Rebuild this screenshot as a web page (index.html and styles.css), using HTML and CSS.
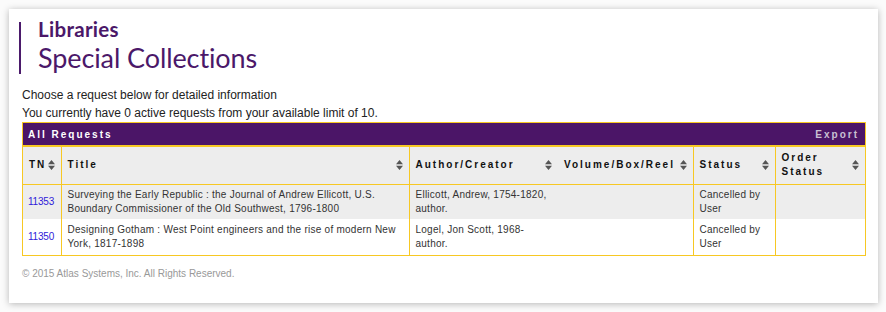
FILE: index.html
```html
<!DOCTYPE html>
<html lang="en">
<head>
    <meta charset="UTF-8">
    <title>Special Collections - All Requests</title>
    <link rel="stylesheet" href="styles.css">
</head>
<body>
    <div class="page">
        <!-- Logo -->
        <div class="logo">
            <div class="logo-top">Libraries</div>
            <div class="logo-name">Special Collections</div>
        </div>

        <p class="intro">Choose a request below for detailed information<br>
        You currently have 0 active requests from your available limit of 10.</p>

        <div class="requests">
            <div class="requests-bar">
                <span>All Requests</span>
                <a class="export" href="#">Export</a>
            </div>
            <table class="grid">
                <colgroup>
                    <col style="width: 38px">
                    <col style="width: 348px">
                    <col style="width: 149px">
                    <col style="width: 135px">
                    <col style="width: 82px">
                    <col style="width: 90px">
                </colgroup>
                <thead>
                    <tr>
                        <th><div class="th">TN <svg class="sort" viewBox="0 0 7 10"><path d="M0 4.2 3.5 0 7 4.2ZM0 5.8 3.5 10 7 5.8Z"/></svg></div></th>
                        <th><div class="th">Title <svg class="sort" viewBox="0 0 7 10"><path d="M0 4.2 3.5 0 7 4.2ZM0 5.8 3.5 10 7 5.8Z"/></svg></div></th>
                        <th class="no-right"><div class="th">Author/Creator <svg class="sort" viewBox="0 0 7 10"><path d="M0 4.2 3.5 0 7 4.2ZM0 5.8 3.5 10 7 5.8Z"/></svg></div></th>
                        <th class="no-left"><div class="th">Volume/Box/Reel <svg class="sort" viewBox="0 0 7 10"><path d="M0 4.2 3.5 0 7 4.2ZM0 5.8 3.5 10 7 5.8Z"/></svg></div></th>
                        <th><div class="th">Status <svg class="sort" viewBox="0 0 7 10"><path d="M0 4.2 3.5 0 7 4.2ZM0 5.8 3.5 10 7 5.8Z"/></svg></div></th>
                        <th><div class="th">Order<br>Status <svg class="sort" viewBox="0 0 7 10"><path d="M0 4.2 3.5 0 7 4.2ZM0 5.8 3.5 10 7 5.8Z"/></svg></div></th>
                    </tr>
                </thead>
                <tbody>
                    <tr class="odd">
                        <td class="tn"><a href="#">11353</a></td>
                        <td>Surveying the Early Republic : the Journal of Andrew Ellicott, U.S. Boundary Commissioner of the Old Southwest, 1796-1800</td>
                        <td class="no-right">Ellicott, Andrew, 1754-1820, author.</td>
                        <td class="no-left"></td>
                        <td>Cancelled by User</td>
                        <td></td>
                    </tr>
                    <tr class="last">
                        <td class="tn"><a href="#">11350</a></td>
                        <td>Designing Gotham : West Point engineers and the rise of modern New York, 1817-1898</td>
                        <td class="no-right">Logel, Jon Scott, 1968- author.</td>
                        <td class="no-left"></td>
                        <td>Cancelled by User</td>
                        <td></td>
                    </tr>
                </tbody>
            </table>
        </div>

        <div class="footer">&copy; 2015 Atlas Systems, Inc. All Rights Reserved.</div>
    </div>
</body>
</html>
```

FILE: styles.css
```css
/* Page */
body {
    margin: 0;
    padding: 9px 8px 9px 9px;
    background: #fbfbfb;
    font-family: "Liberation Sans", Arial, sans-serif;
    color: #333;
}

.page {
    background: #fff;
    height: 294px;
    box-sizing: border-box;
    padding: 13px 12px 0 13px;
    box-shadow: 0 1px 7px rgba(0, 0, 0, 0.28);
}

/* Logo */
.logo {
    display: flex;
    flex-direction: column;
    align-items: flex-start;
    margin-left: -3px;
    padding-left: 17px;
    border-left: 2px solid #4b1a6b;
    color: #4b1869;
    font-family: Lato, "Open Sans", sans-serif;
    height: 52px;
}

.logo-top {
    font-size: 20.5px;
    font-weight: bold;
    line-height: 20px;
    letter-spacing: 0.3px;
    margin-top: -3px;
}

.logo-name {
    font-size: 27px;
    line-height: 37px;
    letter-spacing: -0.1px;
    white-space: nowrap;
}

/* Intro text */
.intro {
    margin: 12px 0 0;
    font-size: 12px;
    line-height: 18px;
    color: #222;
}

/* Requests table */
.requests {
    border: 1px solid #f7c823;
}

.requests-bar {
    display: flex;
    justify-content: space-between;
    align-items: center;
    height: 22px;
    padding: 0 6px 0 5px;
    background: #4b1567;
    color: #fff;
    font-size: 10px;
    font-weight: bold;
    letter-spacing: 2px;
    border-bottom: 2px solid #f7c823;
}

.export {
    color: #c9c0d3;
    text-decoration: none;
}

.grid {
    width: 100%;
    border-collapse: collapse;
    table-layout: fixed;
    font-size: 10px;
}

.grid th,
.grid td {
    border-left: 1px solid #f7c823;
    border-right: 1px solid #f7c823;
    padding: 0 6px;
    text-align: left;
    vertical-align: middle;
}

.grid tr > :first-child {
    border-left: none;
}

.grid tr > :last-child {
    border-right: none;
}

.grid .no-right {
    border-right: none;
}

.grid .no-left {
    border-left: none;
}

.grid thead tr {
    background: #ededed;
    height: 37px;
    border-bottom: 1px solid #f7c823;
}

.th {
    display: flex;
    align-items: center;
    font-weight: bold;
    letter-spacing: 2px;
    line-height: 14px;
    color: #111;
    white-space: nowrap;
}

.sort {
    width: 7px;
    height: 10px;
    margin-left: auto;
    flex-shrink: 0;
    fill: #555;
}

.grid tbody tr {
    height: 35px;
}

.grid tbody tr.last {
    height: 36px;
}

.grid tbody tr.odd {
    background: #ededed;
}

.grid td {
    line-height: 14px;
    letter-spacing: 0.25px;
    padding-top: 3px;
    padding-bottom: 3px;
    color: #333;
}

.grid td.tn {
    padding-left: 5px;
}

.tn a {
    color: #2f1ad9;
    text-decoration: none;
    letter-spacing: -0.2px;
}

/* Footer */
.footer {
    margin-top: 12px;
    font-size: 10px;
    color: #999;
}
```
